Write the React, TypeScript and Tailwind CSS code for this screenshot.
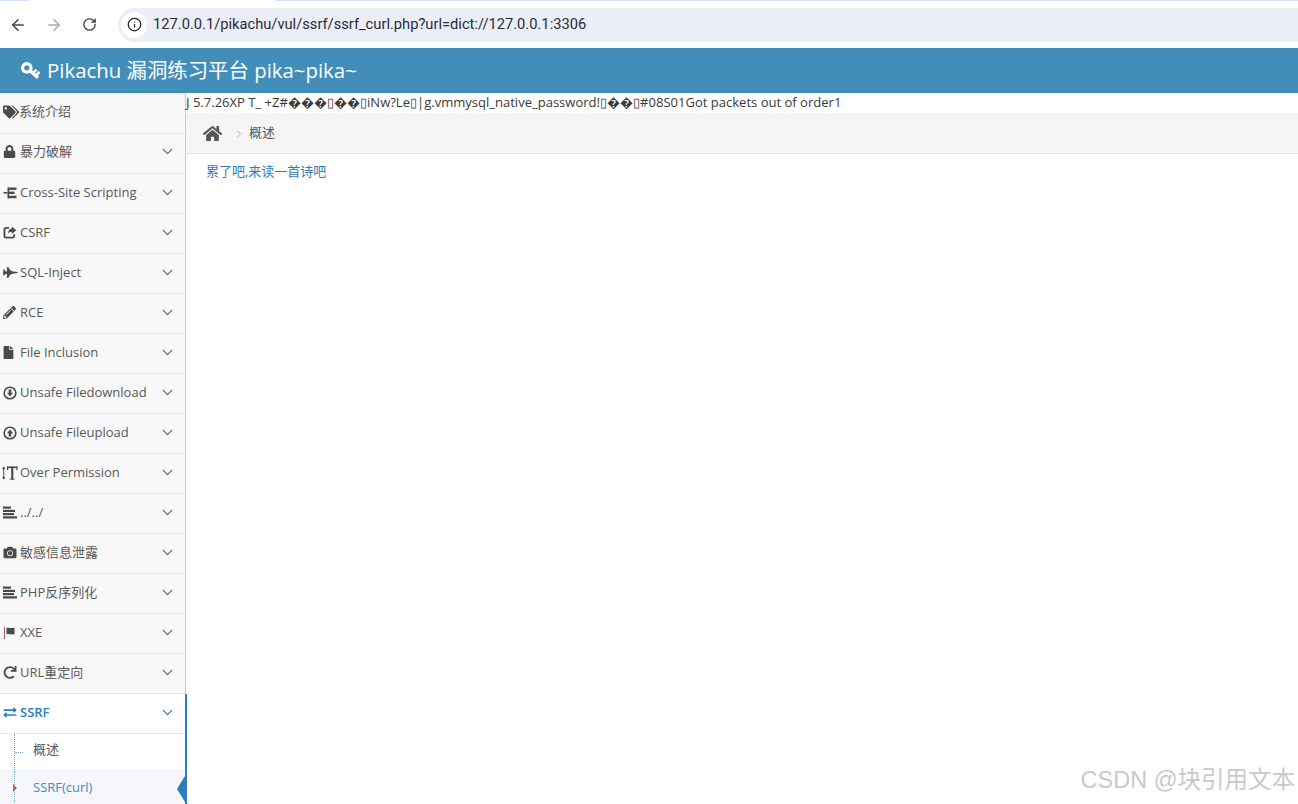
import { ArrowLeft, ArrowRight, ChevronDown, ChevronRight, Info, RotateCw } from 'lucide-react';
import type { ComponentType } from 'react';
import { FaCamera, FaExchangeAlt, FaFighterJet, FaFile, FaHome, FaLock, FaPencilAlt, FaRedo, FaTags } from 'react-icons/fa';

type IconProps = { className?: string };

function KeyIcon({ className }: IconProps) {
  return (
    <svg viewBox="0 0 19 18" className={className} fill="none" stroke="currentColor">
      <circle cx="5.8" cy="5.8" r="4.2" strokeWidth="3.2" />
      <path d="M8.6 8.2 L17 15.8" strokeWidth="3.4" />
      <path d="M12.6 10.6 L15.4 7.6 M15.4 13.2 L18.4 10" strokeWidth="2.6" />
    </svg>
  );
}

function SiteIcon({ className }: IconProps) {
  return (
    <svg viewBox="0 0 14 14" className={className} fill="currentColor">
      <rect x="0" y="6" width="4" height="1.6" />
      <rect x="4" y="1.5" width="1.6" height="11" />
      <rect x="5" y="1.5" width="8" height="2.4" />
      <rect x="5" y="5.6" width="6" height="2.4" />
      <rect x="5" y="9.8" width="8" height="2.4" />
    </svg>
  );
}

function FlagIcon({ className }: IconProps) {
  return (
    <svg viewBox="0 0 14 14" className={className} fill="currentColor">
      <rect x="1" y="1" width="1" height="12" fill="#a0606a" />
      <path d="M3.5 2 C6 1 7.5 3 11.5 1.6 V8 C8 9.4 6 7.4 3.5 8.4 Z" />
    </svg>
  );
}

function ShareIcon({ className }: IconProps) {
  return (
    <svg viewBox="0 0 14 14" className={className} fill="none" stroke="currentColor">
      <path d="M11.5 9 V10.5 A2 2 0 0 1 9.5 12.5 H3 A2 2 0 0 1 1 10.5 V4 A2 2 0 0 1 3 2 H6" strokeWidth="2" />
      <path d="M9 0.5 L13.8 4.5 L9 8.5 V6.2 C7 6.2 5.8 7 5 8.5 C5 5 6.5 3 9 2.8 Z" fill="currentColor" stroke="none" />
    </svg>
  );
}

function CircleDownIcon({ className }: IconProps) {
  return (
    <svg viewBox="0 0 14 14" className={className} fill="none">
      <circle cx="7" cy="7" r="5.8" stroke="currentColor" strokeWidth="1.6" />
      <path d="M5.7 3.4 H8.3 V6.8 H10 L7 10.4 L4 6.8 H5.7 Z" fill="currentColor" />
    </svg>
  );
}

function CircleUpIcon({ className }: IconProps) {
  return (
    <svg viewBox="0 0 14 14" className={className} fill="none">
      <circle cx="7" cy="7" r="5.8" stroke="currentColor" strokeWidth="1.6" />
      <path d="M5.7 10.6 H8.3 V7.2 H10 L7 3.6 L4 7.2 H5.7 Z" fill="currentColor" />
    </svg>
  );
}

function BarsIcon({ className }: IconProps) {
  return (
    <svg viewBox="0 0 14 13" className={className} fill="currentColor">
      <rect x="0" y="0.5" width="8" height="2.2" />
      <rect x="0" y="3.8" width="12" height="2.2" />
      <rect x="0" y="7" width="11" height="2.2" />
      <rect x="0" y="10.3" width="14" height="2.2" />
    </svg>
  );
}

function TextHeightIcon({ className }: IconProps) {
  return (
    <svg viewBox="0 0 16 14" className={className} fill="currentColor">
      <rect x="1.2" y="1" width="1" height="12" />
      <path d="M0 3 L1.7 0.6 L3.4 3 Z M0 11 L1.7 13.4 L3.4 11 Z" />
      <rect x="5" y="0.5" width="10.5" height="1.6" />
      <rect x="5" y="0.5" width="1.2" height="3.6" />
      <rect x="14.3" y="0.5" width="1.2" height="3.6" />
      <rect x="9.2" y="0.5" width="2.1" height="13" />
      <rect x="7.8" y="12.6" width="4.9" height="1" />
    </svg>
  );
}

type Item = {
  label: string;
  Icon: ComponentType<IconProps>;
  iconClass: string;
  gap: string;
  chevron?: boolean;
  lift?: boolean;
};

const items: Item[] = [
  { label: '系统介绍', Icon: FaTags, iconClass: 'w-[16px] h-[14px]', gap: 'gap-0', chevron: false, lift: true },
  { label: '暴力破解', Icon: FaLock, iconClass: 'w-[13px] h-[13px]', gap: 'gap-[4px]', lift: true },
  { label: 'Cross-Site Scripting', Icon: SiteIcon, iconClass: 'w-[15px] h-[14px]', gap: 'gap-[2px]' },
  { label: 'CSRF', Icon: ShareIcon, iconClass: 'w-[14px] h-[13px]', gap: 'gap-[3px]' },
  { label: 'SQL-Inject', Icon: FaFighterJet, iconClass: 'w-[15px] h-[13px]', gap: 'gap-[2px]' },
  { label: 'RCE', Icon: FaPencilAlt, iconClass: 'w-[13px] h-[13px]', gap: 'gap-[4px]' },
  { label: 'File Inclusion', Icon: FaFile, iconClass: 'w-[11px] h-[13px]', gap: 'gap-[6px]' },
  { label: 'Unsafe Filedownload', Icon: CircleDownIcon, iconClass: 'w-[14px] h-[14px]', gap: 'gap-[3px]' },
  { label: 'Unsafe Fileupload', Icon: CircleUpIcon, iconClass: 'w-[14px] h-[14px]', gap: 'gap-[3px]' },
  { label: 'Over Permission', Icon: TextHeightIcon, iconClass: 'w-[16px] h-[14px] -ml-[1px]', gap: 'gap-[2px]' },
  { label: '../../', Icon: BarsIcon, iconClass: 'w-[14px] h-[13px]', gap: 'gap-[3px]' },
  { label: '敏感信息泄露', Icon: FaCamera, iconClass: 'w-[14px] h-[13px]', gap: 'gap-[3px]' },
  { label: 'PHP反序列化', Icon: BarsIcon, iconClass: 'w-[14px] h-[13px]', gap: 'gap-[3px]' },
  { label: 'XXE', Icon: FlagIcon, iconClass: 'w-[14px] h-[14px]', gap: 'gap-[3px]' },
  { label: 'URL重定向', Icon: FaRedo, iconClass: 'w-[14px] h-[13px]', gap: 'gap-[3px]' },
];

const F = '\uFFFD';
const B = '\u25AF';
const dump = `J 5.7.26XP T_ +Z#${F}${F}${F}${B}${F}${F}${B}iNw?Le${B}|g.vmmysql_native_password!${B}${F}${F}${B}#08S01Got packets out of order1`;

function NavRow({ item }: { item: Item }) {
  const { label, Icon, iconClass, gap, chevron = true, lift = false } = item;
  return (
    <div className={`flex h-[40px] items-center border-b border-[#e5e5e5] pl-[3px] pr-[9px] ${lift ? 'pb-[4px]' : 'pb-[2px]'} ${gap}`}>
      <Icon className={`shrink-0 text-[#4a4a4a] ${iconClass}`} />
      <span className="flex-1 whitespace-nowrap">{label}</span>
      {chevron && <ChevronDown className="h-[17px] w-[17px] text-[#666]" strokeWidth={1.8} />}
    </div>
  );
}

export default function App() {
  return (
    <div className="relative flex h-[804px] flex-col overflow-hidden bg-white font-['Open_Sans','Noto_Sans_CJK_SC',sans-serif] text-[13px] text-[#585858]">
      {/* Browser toolbar */}
      <div className="h-[48px] shrink-0">
        <div className="flex h-[1px]">
          <div className="w-[28px] bg-[#cfe0f8]" />
          <div className="w-[247px] bg-white" />
          <div className="flex-1 bg-[#cfe0f8]" />
        </div>
        <div className="flex h-[47px] items-center pl-[9px]">
          <ArrowLeft className="h-[18px] w-[18px] text-[#444]" strokeWidth={2} />
          <ArrowRight className="ml-[18px] h-[18px] w-[18px] text-[#aaa]" strokeWidth={2} />
          <RotateCw className="ml-[19px] h-[15px] w-[15px] text-[#444]" strokeWidth={2.2} />
          <div className="ml-[21px] flex h-[34px] flex-1 items-center rounded-l-full bg-[#ebeef7] pl-[3px] font-['Roboto','Liberation_Sans',sans-serif]">
            <div className="flex h-[26px] w-[26px] items-center justify-center rounded-full bg-white">
              <Info className="h-[15px] w-[15px] text-[#222]" strokeWidth={2} />
            </div>
            <span className="ml-[6px] text-[14.7px] text-[#2a2a3a]">127.0.0.1/pikachu/vul/ssrf/ssrf_curl.php?url=dict://127.0.0.1:3306</span>
          </div>
        </div>
      </div>

      {/* Site header */}
      <div className="flex h-[45px] shrink-0 items-center gap-[7px] bg-[#438eb9] pl-[21px] text-[20.4px] text-white">
        <KeyIcon className="h-[18px] w-[19px]" />
        <span>Pikachu 漏洞练习平台 pika~pika~</span>
      </div>

      <div className="flex min-h-0 flex-1">
        {/* Sidebar */}
        <div className="w-[186px] shrink-0 border-r border-t border-r-[#cccccc] border-t-[#e5e5e5] bg-[#f8f8f8]">
          {items.map((item) => (
            <NavRow key={item.label} item={item} />
          ))}
          <div className="relative flex h-[40px] items-center gap-[3px] border-b border-[#e5e5e5] bg-white pb-[2px] pl-[3px] pr-[9px] font-semibold text-[#2b7dbc]">
            <FaExchangeAlt className="h-[13px] w-[14px] shrink-0" />
            <span className="flex-1">SSRF</span>
            <ChevronDown className="h-[17px] w-[17px]" strokeWidth={1.8} />
            <div className="absolute right-[-2px] top-0 h-[120px] w-[2px] bg-[#2b7dbc]" />
          </div>
          <div className="relative h-[37px] border-b border-dotted border-[#e4e4e4] bg-white pl-[33px] leading-[31px]">
            概述
            <div className="absolute left-[14px] top-0 h-full border-l border-dotted border-[#7aa6c8]" />
            <div className="absolute left-[15px] top-[18px] w-[8px] border-t border-dotted border-[#7aa6c8]" />
          </div>
          <div className="relative h-[40px] bg-[#f5f7fc] pl-[33px] leading-[32px] text-[#4b88b7]">
            SSRF(curl)
            <div className="absolute left-[14px] top-0 h-full border-l border-dotted border-[#7aa6c8]" />
            <div className="absolute left-[13px] top-[13px] border-y-[4px] border-l-[4px] border-y-transparent border-l-[#c86139]" />
            <div className="absolute right-0 top-[5px] border-y-[13px] border-r-[8px] border-y-transparent border-r-[#2b7dbc]" />
          </div>
        </div>

        {/* Main content */}
        <div className="min-w-0 flex-1">
          <div className="h-[20px] whitespace-nowrap text-[13.04px] leading-[18px] text-[#393939]">{dump}</div>
          <div className="flex h-[41px] items-center border-b border-[#e5e5e5] bg-[#f5f5f5] pl-[17px]">
            <FaHome className="h-[17px] w-[19px] text-[#555]" />
            <ChevronRight className="ml-[11px] mt-[2px] h-[12px] w-[12px] text-[#b2b6bf]" strokeWidth={2} />
            <span className="ml-[4px]">概述</span>
          </div>
          <div className="pl-[20px] pt-[7px] leading-[20px] text-[#337ab7]">累了吧,来读一首诗吧</div>
        </div>
      </div>

      <div className="absolute bottom-[6px] right-[3px] font-['Liberation_Sans','Noto_Sans_CJK_SC',sans-serif] text-[23.5px] text-[#c9c9c9]">CSDN @块引用文本</div>
    </div>
  );
}
